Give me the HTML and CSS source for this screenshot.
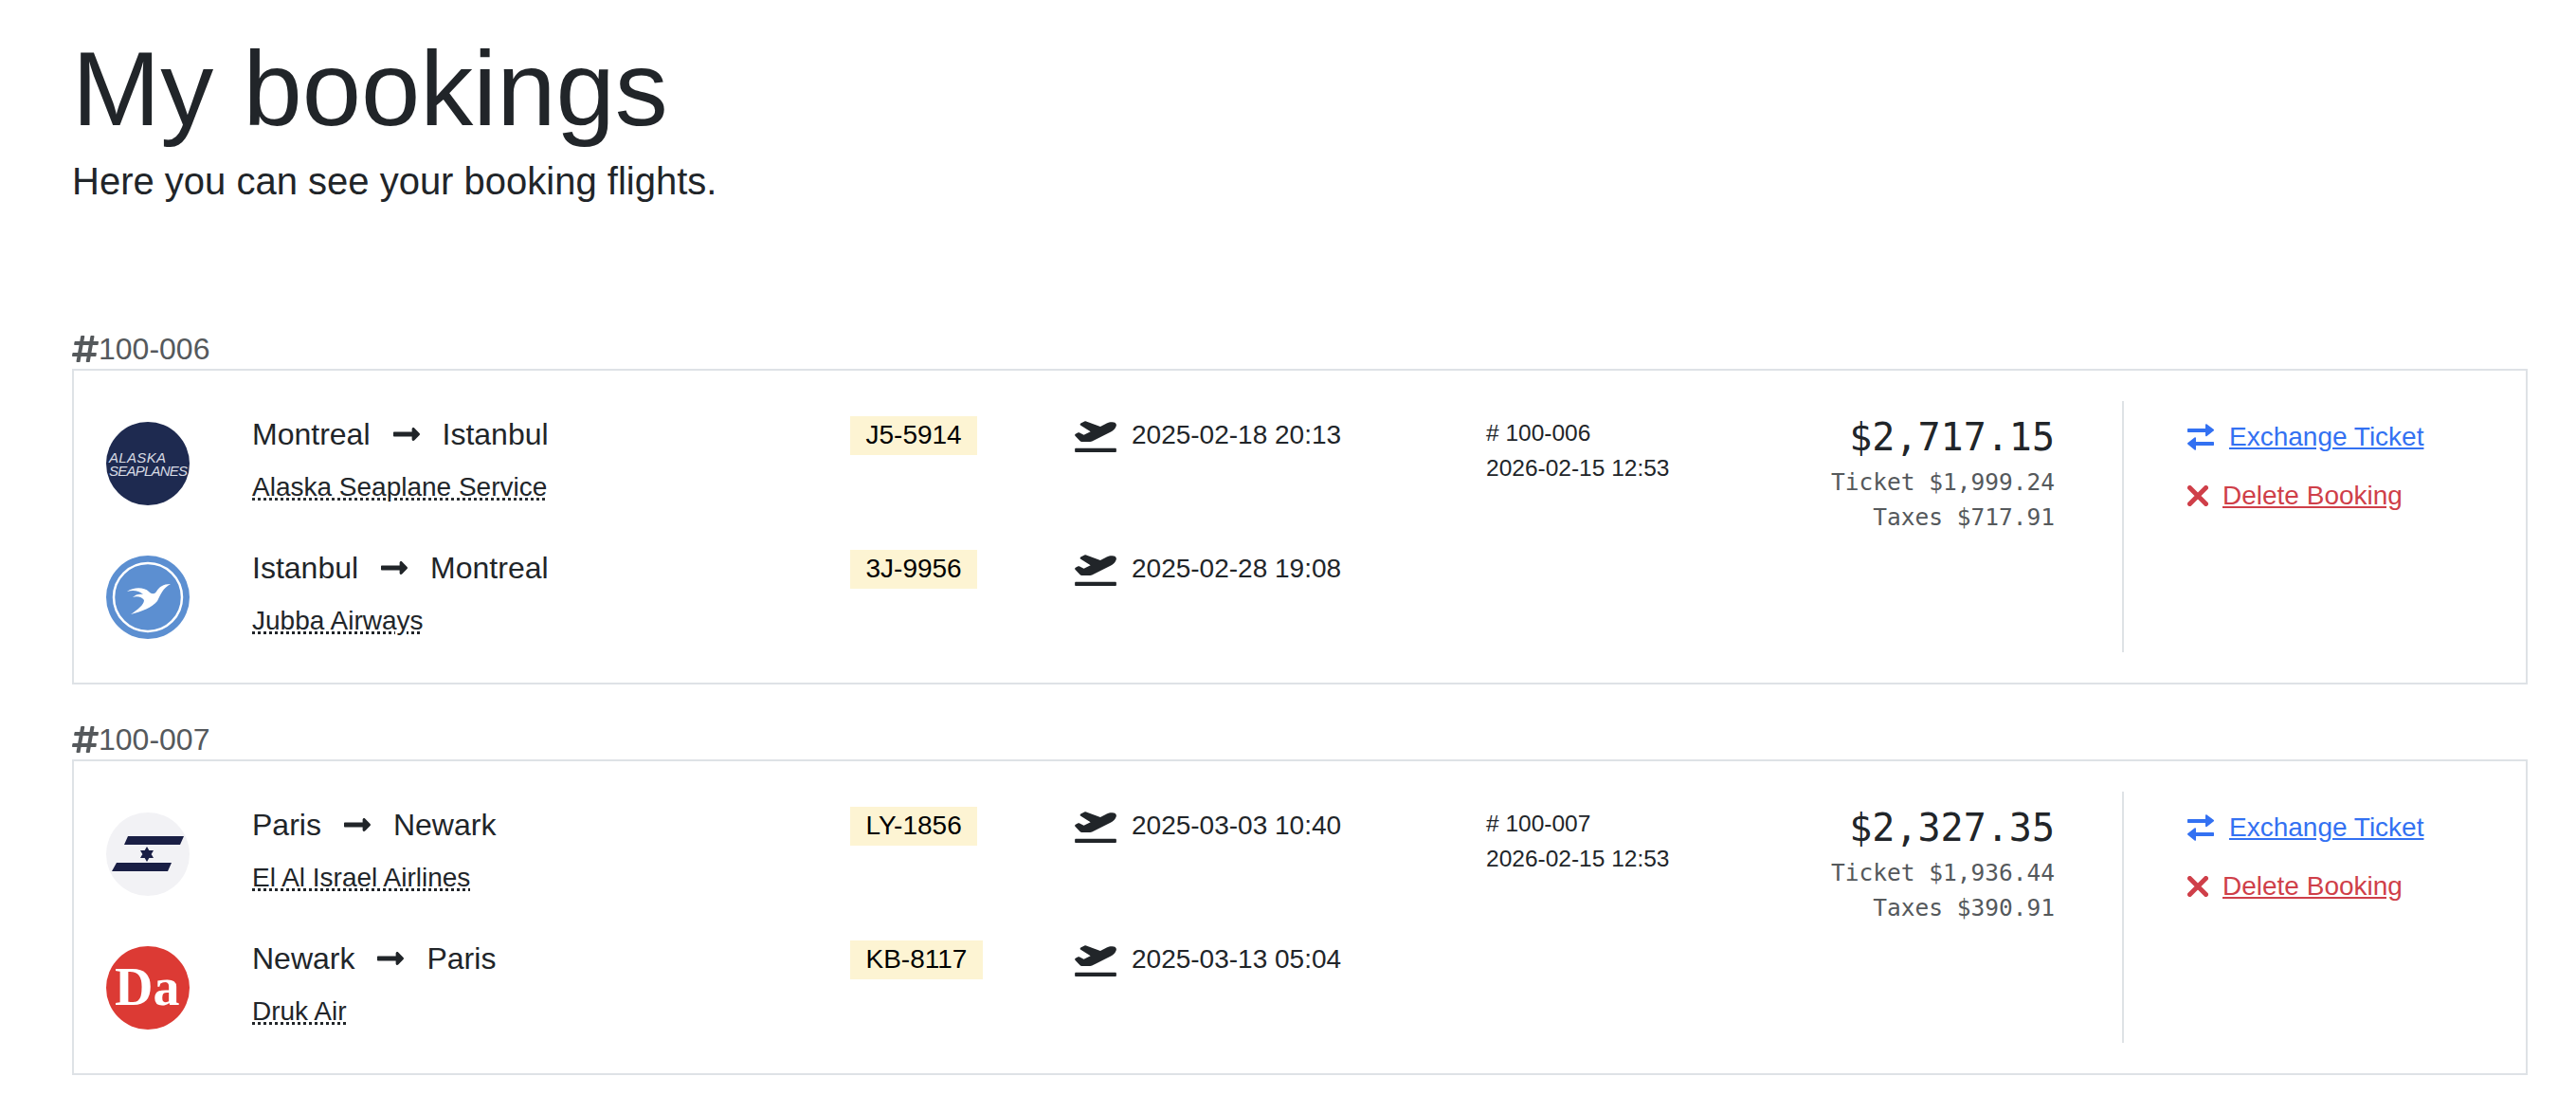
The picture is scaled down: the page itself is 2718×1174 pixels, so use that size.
FILE: index.html
```html
<!DOCTYPE html>
<html lang="en">
<head>
    <meta charset="UTF-8">
    <meta name="viewport" content="width=device-width, initial-scale=1.0">
    <title>My bookings</title>
    <link rel="stylesheet" href="styles.css">
</head>
<body>
    <svg class="sprites" width="0" height="0" aria-hidden="true">
        <symbol id="i-hash" viewBox="0 0 448 512"><path d="M440.667 182.109l7.143-40c1.313-7.355-4.342-14.109-11.813-14.109h-74.81l14.623-81.891C377.123 38.754 371.468 32 363.997 32h-40.632a12 12 0 0 0-11.813 9.891L296.175 128H197.54l14.623-81.891C213.477 38.754 207.822 32 200.35 32h-40.632a12 12 0 0 0-11.813 9.891L132.528 128H53.432a12 12 0 0 0-11.813 9.891l-7.143 40C33.163 185.246 38.818 192 46.289 192h74.81L98.242 320H19.146a12 12 0 0 0-11.813 9.891l-7.143 40C-1.123 377.246 4.532 384 12.003 384h74.81L72.19 465.891C70.877 473.246 76.532 480 84.003 480h40.632a12 12 0 0 0 11.813-9.891L151.825 384h98.634l-14.623 81.891C234.523 473.246 240.178 480 247.65 480h40.632a12 12 0 0 0 11.813-9.891L315.472 384h79.096a12 12 0 0 0 11.813-9.891l7.143-40c1.313-7.355-4.342-14.109-11.813-14.109h-74.81l22.857-128h79.096a12 12 0 0 0 11.813-9.891zM261.889 320h-98.634l22.857-128h98.634l-22.857 128z"/></symbol>
        <symbol id="i-arrow" viewBox="0 0 448 512"><path d="M313.941 216H12c-6.627 0-12 5.373-12 12v56c0 6.627 5.373 12 12 12h301.941v46.059c0 21.382 25.851 32.09 40.971 16.971l86.059-86.059c9.373-9.373 9.373-24.569 0-33.941l-86.059-86.059c-15.119-15.119-40.971-4.411-40.971 16.971V216z"/></symbol>
        <symbol id="i-plane" viewBox="0 0 640 512"><path d="M624 448H16c-8.84 0-16 7.16-16 16v32c0 8.84 7.16 16 16 16h608c8.84 0 16-7.16 16-16v-32c0-8.84-7.16-16-16-16zM80.55 341.27c6.28 6.84 15.1 10.72 24.33 10.71l130.54-.18a65.62 65.62 0 0 0 29.64-7.12l290.96-147.65c26.74-13.57 50.71-32.94 67.02-58.31 18.31-28.48 20.3-49.09 13.07-63.65-7.21-14.57-24.74-25.27-58.25-27.45-29.85-1.94-59.54 5.92-86.28 19.48l-98.51 49.99-218.7-82.06a17.799 17.799 0 0 0-18-1.11L90.62 67.29c-10.67 5.41-13.25 19.65-5.17 28.53l156.22 98.1-103.21 52.38-72.35-36.47a17.804 17.804 0 0 0-16.07.02L9.91 230.22c-10.44 5.3-13.19 19.12-5.57 28.08l76.21 82.97z"/></symbol>
        <symbol id="i-exchange" viewBox="0 0 28 28"><path d="M1 5H19V1C19 0 20 0 20.500 .5L27.500 5.800C28.200 6.400 28.200 7 27.500 7.600L20.500 12.900C20 13.300 19 13.300 19 12.300V9H1C.3 9 0 8.700 0 8V6C0 5.300 .3 5 1 5ZM27 19H9V15C9 14 8 14 7.500 14.500L.5 20C-.2 20.600 -.2 21.200 .5 21.800L7.500 27.500C8 28 9 28 9 27V23H27C27.700 23 28 22.700 28 22V20C28 19.300 27.700 19 27 19Z"/></symbol>
        <symbol id="i-times" viewBox="0 0 22 22"><path d="M2.500 2.500L19.500 19.500M19.500 2.500L2.500 19.500" fill="none" stroke="currentColor" stroke-width="5" stroke-linecap="round"/></symbol>
    </svg>

    <main>
        <h1>My bookings</h1>
        <p class="lead">Here you can see your booking flights.</p>

        <section class="booking">
            <h2 class="booking-no"><svg class="i-hash"><use href="#i-hash"/></svg>100-006</h2>
            <div class="card">
                <div class="legs">
                    <div class="leg">
                        <svg class="logo" viewBox="0 0 88 88">
                            <circle cx="44" cy="44" r="44" fill="#1e2a50"/>
                            <text class="logo-alaska" x="3" y="43" textLength="60">ALASKA</text>
                            <text class="logo-alaska" x="3" y="57" textLength="83">SEAPLANES</text>
                        </svg>
                        <div>
                            <p class="route">Montreal <svg class="i-arrow"><use href="#i-arrow"/></svg> Istanbul</p>
                            <p class="airline"><a href="#">Alaska Seaplane Service</a></p>
                        </div>
                        <div><span class="flight-no">J5-5914</span></div>
                        <p class="depart"><svg class="i-plane"><use href="#i-plane"/></svg>2025-02-18 20:13</p>
                    </div>
                    <div class="leg">
                        <svg class="logo" viewBox="0 0 88 88">
                            <circle cx="44" cy="44" r="44" fill="#5c8fd1"/>
                            <circle cx="44" cy="44" r="36" fill="none" stroke="#fff" stroke-width="2.500"/>
                            <path fill="#fff" d="M68 30C60 30 56 33 53 38C51 41 48 41 45 38C40 33 29 33 22 38C28 36 35 37 39 41C35 40 31 41 28 44C33 42 38 44 40 47C40 52 33 57 26 62C38 59 48 55 54 48C57 42 60 34 68 30Z"/>
                        </svg>
                        <div>
                            <p class="route">Istanbul <svg class="i-arrow"><use href="#i-arrow"/></svg> Montreal</p>
                            <p class="airline"><a href="#">Jubba Airways</a></p>
                        </div>
                        <div><span class="flight-no">3J-9956</span></div>
                        <p class="depart"><svg class="i-plane"><use href="#i-plane"/></svg>2025-02-28 19:08</p>
                    </div>
                </div>
                <div class="issued">
                    <p># 100-006</p>
                    <p>2026-02-15 12:53</p>
                </div>
                <div class="price">
                    <p class="total">$2,717.15</p>
                    <p>Ticket $1,999.24</p>
                    <p>Taxes $717.91</p>
                </div>
                <div class="actions">
                    <p class="action exchange"><svg class="i-exchange"><use href="#i-exchange"/></svg><a href="#">Exchange Ticket</a></p>
                    <p class="action delete"><svg class="i-times"><use href="#i-times"/></svg><a href="#">Delete Booking</a></p>
                </div>
            </div>
        </section>

        <section class="booking">
            <h2 class="booking-no"><svg class="i-hash"><use href="#i-hash"/></svg>100-007</h2>
            <div class="card">
                <div class="legs">
                    <div class="leg">
                        <svg class="logo" viewBox="0 0 88 88">
                            <circle cx="44" cy="44" r="44" fill="#f2f2f5"/>
                            <path fill="#1a1f45" d="M23 25H82L78 34H19ZM11 53H69L65 62H6Z"/>
                            <path fill="#1a1f45" d="M43 36L50 48H36ZM43 52L36 40H50Z"/>
                        </svg>
                        <div>
                            <p class="route">Paris <svg class="i-arrow"><use href="#i-arrow"/></svg> Newark</p>
                            <p class="airline"><a href="#">El Al Israel Airlines</a></p>
                        </div>
                        <div><span class="flight-no">LY-1856</span></div>
                        <p class="depart"><svg class="i-plane"><use href="#i-plane"/></svg>2025-03-03 10:40</p>
                    </div>
                    <div class="leg">
                        <svg class="logo" viewBox="0 0 88 88">
                            <circle cx="44" cy="44" r="44" fill="#dc3a34"/>
                            <text class="logo-druk" x="9" y="62">Da</text>
                        </svg>
                        <div>
                            <p class="route">Newark <svg class="i-arrow"><use href="#i-arrow"/></svg> Paris</p>
                            <p class="airline"><a href="#">Druk Air</a></p>
                        </div>
                        <div><span class="flight-no">KB-8117</span></div>
                        <p class="depart"><svg class="i-plane"><use href="#i-plane"/></svg>2025-03-13 05:04</p>
                    </div>
                </div>
                <div class="issued">
                    <p># 100-007</p>
                    <p>2026-02-15 12:53</p>
                </div>
                <div class="price">
                    <p class="total">$2,327.35</p>
                    <p>Ticket $1,936.44</p>
                    <p>Taxes $390.91</p>
                </div>
                <div class="actions">
                    <p class="action exchange"><svg class="i-exchange"><use href="#i-exchange"/></svg><a href="#">Exchange Ticket</a></p>
                    <p class="action delete"><svg class="i-times"><use href="#i-times"/></svg><a href="#">Delete Booking</a></p>
                </div>
            </div>
        </section>
    </main>
</body>
</html>
```

FILE: styles.css
```css
* {
    box-sizing: border-box;
}
body {
    margin: 0;
    background: #fff;
    color: #212529;
    font-family: "Liberation Sans", Arial, sans-serif;
    font-size: 28px;
    line-height: 1.5;
}
p {
    margin: 0;
}
.sprites {
    position: absolute;
}
svg {
    fill: currentColor;
}
main {
    padding: 27px 51px 0 76px;
}
h1 {
    margin: 0;
    font-size: 112px;
    font-weight: 400;
    line-height: 134px;
}
.lead {
    font-size: 40px;
    line-height: 60px;
}
.booking {
    margin-top: 39px;
}
.booking:first-of-type {
    margin-top: 128px;
}
.booking-no {
    display: flex;
    align-items: center;
    margin: 0 0 2px;
    color: #55595c;
    font-size: 32px;
    font-weight: 400;
    line-height: 38px;
}
.i-hash {
    width: 28px;
    height: 32px;
}
.card {
    display: grid;
    grid-template-columns: 1456px 300px 300px 1fr;
    padding: 32px 0 32px 34px;
    border: 2px solid #dee2e6;
}
.legs {
    display: flex;
    flex-direction: column;
    gap: 41px;
    padding: 11px 0 13px;
}
.leg {
    display: grid;
    grid-template-columns: 154px 631px 237px 1fr;
    height: 100px;
}
.logo {
    width: 88px;
    height: 88px;
    margin-top: 11px;
}
.logo-alaska {
    fill: #d8dbe4;
    font-size: 15px;
    font-style: italic;
}
.logo-druk {
    fill: #fff;
    font-family: "Liberation Serif", serif;
    font-size: 56px;
    font-weight: 700;
}
.route {
    display: flex;
    align-items: center;
    gap: 24px;
    margin-bottom: 11px;
    font-size: 32px;
}
.i-arrow {
    width: 28px;
    height: 32px;
}
.airline a {
    color: inherit;
    text-decoration: underline dotted;
}
.flight-no {
    display: inline-block;
    margin-top: 5px;
    padding: 0 16.5px 1px;
    background: #fdf4d3;
    color: #000;
    line-height: 40px;
}
.depart {
    display: flex;
    align-items: center;
    gap: 16px;
    height: 42px;
    margin-top: 4px;
}
.i-plane {
    flex: none;
    width: 44px;
    height: 35px;
}
.issued {
    padding-top: 16px;
    font-size: 24.5px;
}
.price {
    padding-top: 8px;
    color: #55595c;
    font-family: "DejaVu Sans Mono", monospace;
    font-size: 24.5px;
    text-align: right;
}
.total {
    color: #212529;
    font-size: 40px;
}
.actions {
    display: flex;
    flex-direction: column;
    gap: 20px;
    margin-left: 71px;
    padding: 17px 0 0 67px;
    border-left: 2px solid #dee2e6;
}
.action {
    display: flex;
    align-items: center;
    gap: 16px;
}
.action a {
    color: inherit;
}
.exchange {
    color: #3371f2;
}
.delete {
    gap: 15px;
    color: #cf3f49;
}
.i-exchange {
    width: 28px;
    height: 28px;
}
.i-times {
    width: 22px;
    height: 22px;
}
```
